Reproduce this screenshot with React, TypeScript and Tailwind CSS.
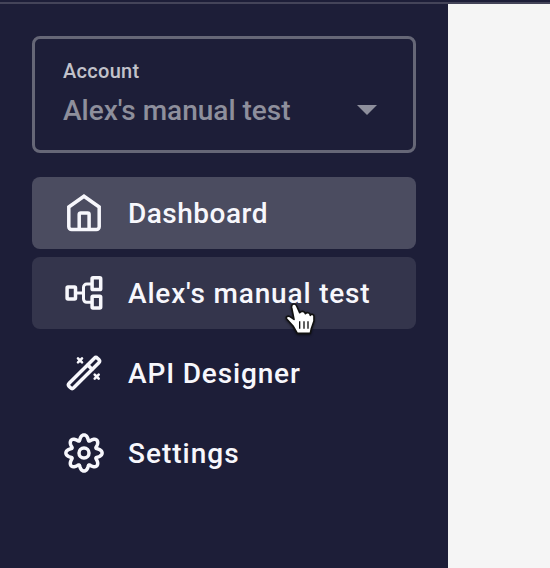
import type { ReactNode } from "react";

const gearPath =
  Array.from({ length: 240 }, (_, i) => {
    const t = (i / 240) * Math.PI * 2;
    const a = t + 0.04 * Math.sin(8 * t);
    const r = 15.5 + 2.6 * Math.cos(8 * t);
    return `${i ? "L" : "M"}${(20 + r * Math.cos(a)).toFixed(2)} ${(20 + r * Math.sin(a)).toFixed(2)}`;
  }).join("") + "Z";

function Icon({ children }: { children: ReactNode }) {
  return (
    <svg className="size-10 shrink-0" viewBox="0 0 40 40" fill="none" stroke="currentColor" strokeWidth="3.5" strokeLinejoin="round" strokeLinecap="round">
      {children}
    </svg>
  );
}

function HomeIcon() {
  return (
    <Icon>
      <path d="M20 3.2 35.2 14V33.8a2.8 2.8 0 0 1-2.8 2.8H7.6A2.8 2.8 0 0 1 4.8 33.8V14Z" strokeLinejoin="miter" />
      <path d="M15.2 36V21.4a1.5 1.5 0 0 1 1.5-1.5h6.9a1.5 1.5 0 0 1 1.5 1.5V36" />
    </Icon>
  );
}

function NodesIcon() {
  return (
    <Icon>
      <rect x="3.1" y="14" width="8.4" height="12" rx="0.9" />
      <rect x="28.1" y="4.8" width="8.6" height="11.8" rx="0.9" />
      <rect x="28.1" y="23.2" width="8.6" height="11.8" rx="0.9" />
      <path d="M12 20h7.2M27 11h-4.3a3.2 3.2 0 0 0-3.2 3.2v11.9a3.2 3.2 0 0 0 3.2 3.2H27" strokeWidth="3" />
    </Icon>
  );
}

function WandIcon() {
  return (
    <Icon>
      <g transform="rotate(-45 20 20)">
        <rect x="0" y="16.8" width="40" height="6.4" rx="2.2" />
        <path d="M28.3 17v6" />
      </g>
      <path d="m14 5.3 4 4m0-4-4 4M30.7 21.7l4 4m0-4-4 4" strokeWidth="2.6" />
    </Icon>
  );
}

function GearIcon() {
  return (
    <Icon>
      <path d={gearPath} />
      <circle cx="20" cy="20" r="5" />
    </Icon>
  );
}

function NavItem({ icon, label, className = "", labelClass }: { icon: ReactNode; label: string; className?: string; labelClass: string }) {
  return (
    <a className={`flex h-[72px] items-center gap-6 rounded-lg pl-8 ${className}`}>
      {icon}
      <span className={`whitespace-nowrap pt-0.5 text-[28px] leading-8 font-medium ${labelClass}`}>{label}</span>
    </a>
  );
}

export default function App() {
  return (
    <div className="relative flex h-[568px] w-[550px] flex-col overflow-hidden bg-[#f5f5f5] font-['Roboto','Liberation_Sans',sans-serif]">
      <header className="h-1 shrink-0 border-b-2 border-[#444459] bg-[#1d1e38]" />
      <aside className="w-[448px] flex-1 bg-[#1d1e38] px-8 pt-8 text-[#f7f7fc]">
        <div className="flex h-[117px] flex-col rounded-lg border-3 border-[#666777] pt-5 pr-9 pl-7">
          <span className="text-[20px] leading-6 font-medium tracking-[0.3px] text-[#c2c2ca]">Account</span>
          <div className="mt-[10px] flex items-center justify-between text-[#8e8f9c]">
            <span className="pt-0.5 text-[28px] leading-8 font-medium">Alex's manual test</span>
            <svg className="h-[10px] w-5" viewBox="0 0 20 10" fill="currentColor">
              <path d="M0 0h20L10 10Z" />
            </svg>
          </div>
        </div>
        <nav className="mt-6 flex flex-col gap-2">
          <NavItem icon={<HomeIcon />} label="Dashboard" className="bg-[#4b4c60]" labelClass="tracking-[0.5px]" />
          <NavItem icon={<NodesIcon />} label="Alex's manual test" className="bg-[#34354c]" labelClass="tracking-[0.83px]" />
          <NavItem icon={<WandIcon />} label="API Designer" labelClass="tracking-[0.85px]" />
          <NavItem icon={<GearIcon />} label="Settings" labelClass="tracking-[1px]" />
        </nav>
      </aside>
      <svg className="absolute top-[302px] left-[284px] h-9 w-8 drop-shadow-[0_1px_1px_rgba(0,0,0,0.5)]" viewBox="42 96 96 108">
        <path d="M72 102C66 102 64 107 65 113L72 148 60 140C54 136 46 140 50 147L69 168 82 190H121L124 176 132 153V139C132 132 124 131 121 136 120 127 110 126 106 131 104 123 94 122 89 128L80 108C78 103 76 102 72 102Z" fill="white" stroke="#111" strokeWidth="5" strokeLinejoin="round" />
        <path d="M89 154V176M102 154V176M114 154V176" stroke="#111" strokeWidth="4" />
      </svg>
    </div>
  );
}
